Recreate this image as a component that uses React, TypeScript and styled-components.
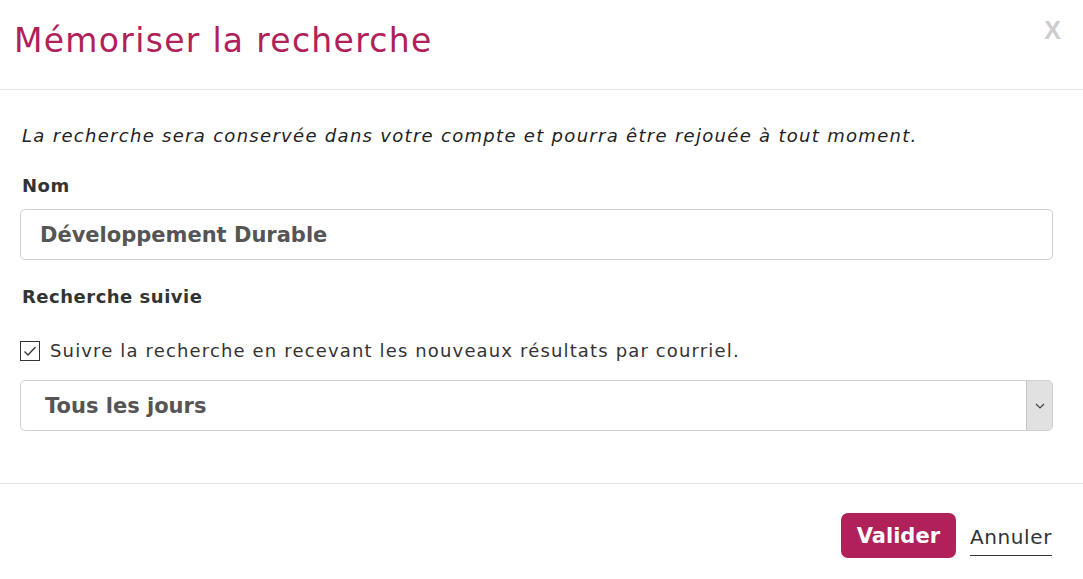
import React from "react";
import styled, { createGlobalStyle } from "styled-components";

const Global = createGlobalStyle`
  html, body { margin: 0; padding: 0; background: #fff; }
  body { font-family: "DejaVu Sans", "Open Sans", sans-serif; color: #333; }
  * { box-sizing: border-box; }
`;

const Modal = styled.div`
  width: 1083px;
  height: 579px;
  display: flex;
  flex-direction: column;
  background: #fff;
`;

const Header = styled.div`
  height: 90px;
  border-bottom: 1px solid #e5e5e5;
  display: flex;
  align-items: flex-start;
  justify-content: space-between;
  padding: 0 22px 0 14px;
`;

const Title = styled.h1`
  margin: 21px 0 0;
  font-size: 33px;
  font-weight: 500;
  letter-spacing: 1.3px;
  color: #b0215a;
  line-height: 40px;
`;

const Close = styled.button`
  margin-top: 15px;
  border: none;
  background: none;
  padding: 0;
  font-family: "Liberation Sans", Arial, sans-serif;
  font-weight: 700;
  font-size: 25px;
  color: #cdcdcd;
  line-height: 30px;
  cursor: pointer;
`;

const Body = styled.div`
  flex: 1;
  display: flex;
  flex-direction: column;
  padding: 34px 30px 0 20px;
  border-bottom: 1px solid #e5e5e5;
`;

const Intro = styled.p`
  margin: 0 0 0 2px;
  font-size: 18px;
  font-style: italic;
  letter-spacing: 1.3px;
  color: #222;
  line-height: 24px;
`;

const Label = styled.div<{ $top: number }>`
  margin: ${(p) => p.$top}px 0 0 2px;
  font-size: 18px;
  font-weight: 700;
  letter-spacing: 0.5px;
  color: #333;
  line-height: 24px;
`;

const Field = styled.div`
  margin-top: 11px;
  height: 51px;
  border: 1px solid #cfcfcf;
  border-radius: 5px;
  display: flex;
  align-items: center;
  overflow: hidden;
`;

const FieldText = styled.span<{ $pad: number }>`
  flex: 1;
  padding-left: ${(p) => p.$pad}px;
  font-size: 21px;
  font-weight: 600;
  color: #555;
`;

const SelectArrow = styled.div`
  width: 26px;
  align-self: stretch;
  background: #e1e1e1;
  border-left: 1px solid #c4c4c4;
  display: flex;
  align-items: center;
  justify-content: center;
`;

const CheckRow = styled.label`
  margin-top: 30px;
  display: flex;
  align-items: center;
  gap: 10px;
  font-size: 18px;
  letter-spacing: 1.15px;
  color: #333;
  line-height: 24px;
`;

const Box = styled.span`
  width: 20px;
  height: 20px;
  border: 1.5px solid #333;
  display: flex;
  align-items: center;
  justify-content: center;
`;

const SelectWrap = styled(Field)`
  margin-top: 17px;
`;

const Footer = styled.div`
  height: 95px;
  display: flex;
  align-items: center;
  justify-content: flex-end;
  gap: 14px;
  padding: 8px 31px 0 0;
`;

const Primary = styled.button`
  height: 45px;
  padding: 0 16px;
  border: none;
  border-radius: 7px;
  background: #b0215a;
  color: #fff;
  font-family: inherit;
  font-size: 21px;
  font-weight: 700;
  cursor: pointer;
`;

const Link = styled.a`
  font-size: 20px;
  letter-spacing: 0.6px;
  color: #333;
  text-decoration: none;
  border-bottom: 1.5px solid #333;
  padding-bottom: 6px;
  margin-top: 10px;
`;

export default function App() {
  return (
    <>
      <Global />
      <Modal>
        <Header>
          <Title>Mémoriser la recherche</Title>
          <Close aria-label="Fermer">X</Close>
        </Header>
        <Body>
          <Intro>
            La recherche sera conservée dans votre compte et pourra être rejouée à tout moment.
          </Intro>
          <Label $top={26}>Nom</Label>
          <Field>
            <FieldText $pad={19}>Développement Durable</FieldText>
          </Field>
          <Label $top={25}>Recherche suivie</Label>
          <CheckRow>
            <Box>
              <svg width="14" height="12" viewBox="0 0 14 12">
                <path d="M1.5 6.5 L5 10 L12.5 2" fill="none" stroke="#333" strokeWidth="1.3" />
              </svg>
            </Box>
            Suivre la recherche en recevant les nouveaux résultats par courriel.
          </CheckRow>
          <SelectWrap>
            <FieldText $pad={24}>Tous les jours</FieldText>
            <SelectArrow>
              <svg width="12" height="8" viewBox="0 0 12 8">
                <path d="M2 2 L6 6 L10 2" fill="none" stroke="#444" strokeWidth="1.2" />
              </svg>
            </SelectArrow>
          </SelectWrap>
        </Body>
        <Footer>
          <Primary>Valider</Primary>
          <Link href="#">Annuler</Link>
        </Footer>
      </Modal>
    </>
  );
}
